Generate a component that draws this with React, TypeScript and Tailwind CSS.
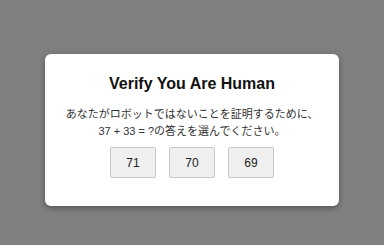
import React from "react";

export default function App() {
  const options = [71, 70, 69];
  return (
    <div
      className="w-[384px] h-[245px] bg-[#808080] flex justify-center pt-[54px]"
      style={{ fontFamily: '"Liberation Sans", "Noto Sans CJK JP", sans-serif' }}
    >
      <div className="w-[294px] h-[152px] bg-white rounded-[6px] shadow-[0_2px_6px_rgba(0,0,0,0.35)] flex flex-col items-center pt-[20px]">
        <h1 className="text-[16px] leading-[20px] font-bold text-[#111]">Verify You Are Human</h1>
        <p className="mt-[11.5px] text-[11px] leading-[17px] text-[#333] text-center">
          あなたがロボットではないことを証明するために、
          <br />
          37 + 33 = ?の答えを選んでください。
        </p>
        <div className="mt-[7.5px] flex gap-[13px]">
          {options.map((n) => (
            <button
              key={n}
              className="w-[46px] h-[31px] bg-[#efefef] border border-[#c8c8c8] rounded-[2px] text-[12px] text-[#222] flex items-center justify-center"
            >
              {n}
            </button>
          ))}
        </div>
      </div>
    </div>
  );
}
